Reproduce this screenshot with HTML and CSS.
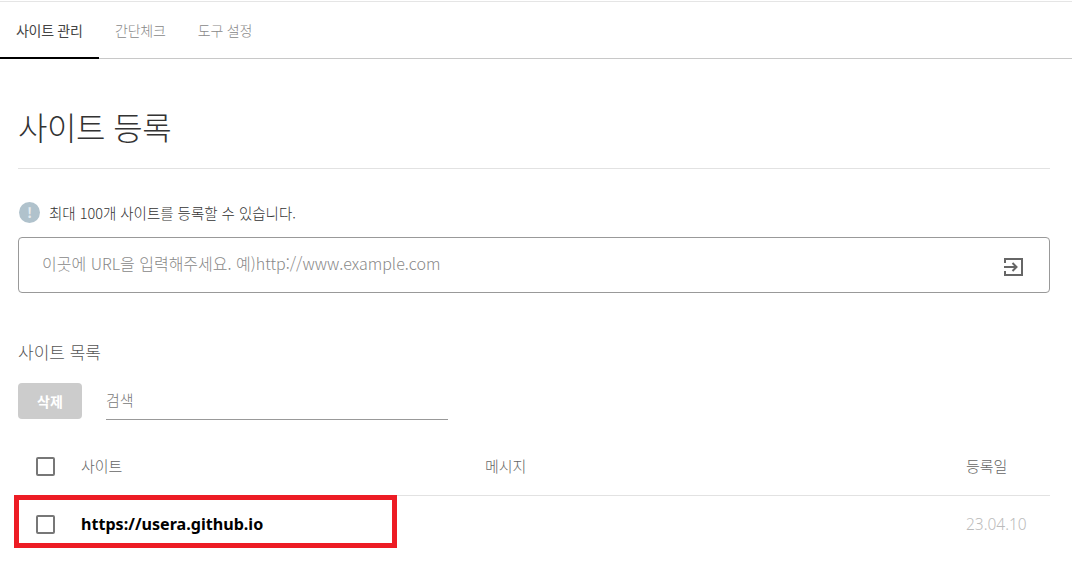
FILE: index.html
```html
<!DOCTYPE html>
<html lang="ko">
<head>
<meta charset="utf-8">
<title>사이트 관리</title>
<link rel="stylesheet" href="styles.css">
</head>
<body>
<div class="page">
  <nav class="tabs">
    <a class="tab tab-active">사이트 관리</a>
    <a class="tab">간단체크</a>
    <a class="tab">도구 설정</a>
  </nav>
  <main class="content">
    <h1 class="title">사이트 등록</h1>
    <p class="notice">
      <span class="notice-icon">!</span>
      <span>최대 100개 사이트를 등록할 수 있습니다.</span>
    </p>
    <div class="url-box">
      <span class="url-placeholder">이곳에 URL을 입력해주세요. 예)http://www.example.com</span>
      <svg class="url-icon" width="20" height="20" viewBox="0 0 20 20" fill="none" stroke="#666" stroke-width="2">
        <path d="M2 6V2H19V18H2V14"/>
        <path d="M1 10H13"/>
        <path d="M9.5 6L13.5 10L9.5 14"/>
      </svg>
    </div>
    <h2 class="list-title">사이트 목록</h2>
    <div class="toolbar">
      <button class="delete-btn">삭제</button>
      <div class="search">검색</div>
    </div>
    <div class="row row-head">
      <span class="check"></span>
      <span class="col-site head-label">사이트</span>
      <span class="col-msg head-label">메시지</span>
      <span class="col-date head-label">등록일</span>
    </div>
    <div class="row row-item">
      <span class="check"></span>
      <span class="col-site site-link">https://usera.github.io</span>
      <span class="col-msg"></span>
      <span class="col-date date-value">23.04.10</span>
      <span class="highlight"></span>
    </div>
  </main>
</div>
</body>
</html>
```

FILE: styles.css
```css
* { box-sizing: border-box; }
html, body { margin: 0; padding: 0; background: #fff; }
body {
  font-family: "Noto Sans CJK KR", "Noto Sans", Roboto, sans-serif;
  color: #333;
  overflow: hidden;
}
.page { width: 1072px; height: 573px; padding-top: 1px; }
.tabs {
  display: flex;
  height: 58px;
  border-top: 1px solid #e5e5e5;
  border-bottom: 1px solid #c8c8c8;
}
.tab {
  height: 57px;
  padding: 0 16px;
  font-size: 14px;
  font-weight: 300;
  line-height: 56px;
  letter-spacing: -0.2px;
  white-space: nowrap;
  color: #888;
}
.tab-active {
  width: 99px;
  font-weight: 400;
  letter-spacing: -0.3px;
  color: #444;
  border-bottom: 2px solid #000;
}
.content { width: 1050px; padding-left: 18px; }
.title {
  margin: 0;
  height: 110px;
  padding-top: 37px;
  font-size: 32px;
  font-weight: 300;
  line-height: 60px;
  letter-spacing: -0.5px;
  color: #333;
  border-bottom: 1px solid #e2e2e2;
}
.notice {
  display: flex;
  align-items: center;
  gap: 9px;
  margin: 0;
  padding-top: 18px;
  height: 68px;
  font-size: 14.5px;
  font-weight: 300;
  letter-spacing: -0.02px;
  color: #333;
}
.notice-icon {
  width: 21px;
  height: 21px;
  margin-left: 1px;
  border-radius: 50%;
  background: #b0c2cc;
  color: #e6ecef;
  font-size: 14px;
  font-weight: 700;
  line-height: 21px;
  text-align: center;
}
.url-box {
  display: flex;
  align-items: center;
  justify-content: space-between;
  height: 56px;
  padding: 0 26px 5px 23px;
  border: 1px solid #999;
  border-radius: 4px;
}
.url-placeholder { font-size: 16px; font-weight: 300; letter-spacing: 0; color: #888; }
.url-icon { display: block; margin-top: 10px; margin-bottom: 2px; }
.list-title {
  margin: 47px 0 0;
  height: 41px;
  font-size: 17px;
  font-weight: 300;
  line-height: 24px;
  color: #555;
}
.toolbar { display: flex; align-items: center; height: 38px; padding-top: 2px; }
.delete-btn {
  width: 64px;
  height: 36px;
  padding: 0;
  border: 0;
  border-radius: 4px;
  background: #ccc;
  color: #fff;
  font-family: inherit;
  font-size: 14px;
  font-weight: 700;
}
.search {
  width: 342px;
  height: 37px;
  margin-left: 24px;
  border-bottom: 1px solid #999;
  font-size: 15px;
  font-weight: 300;
  line-height: 33px;
  color: #777;
}
.row {
  position: relative;
  display: flex;
  align-items: center;
  padding-left: 18px;
}
.row-head {
  height: 77px;
  padding-top: 18px;
  border-bottom: 1px solid #e2e2e2;
  font-size: 15px;
  font-weight: 300;
  color: #666;
}
.head-label { margin-bottom: 2px; }
.row-item { height: 56px; }
.check {
  width: 19px;
  height: 19px;
  border: 2px solid #777;
  border-radius: 2px;
  flex: none;
}
.col-site { width: 404px; margin-left: 26px; flex: none; }
.col-msg { flex: 1; }
.col-date { width: 84px; flex: none; }
.site-link {
  font-family: "Noto Sans", sans-serif;
  font-size: 16.1px;
  font-weight: 700;
  color: #000;
}
.date-value {
  font-family: "Noto Sans", sans-serif;
  font-size: 15.5px;
  font-weight: 300;
  color: #bbb;
}
.highlight {
  position: absolute;
  left: -4px;
  top: -1px;
  width: 383px;
  height: 53px;
  border: 5px solid #ed1c24;
}
```
